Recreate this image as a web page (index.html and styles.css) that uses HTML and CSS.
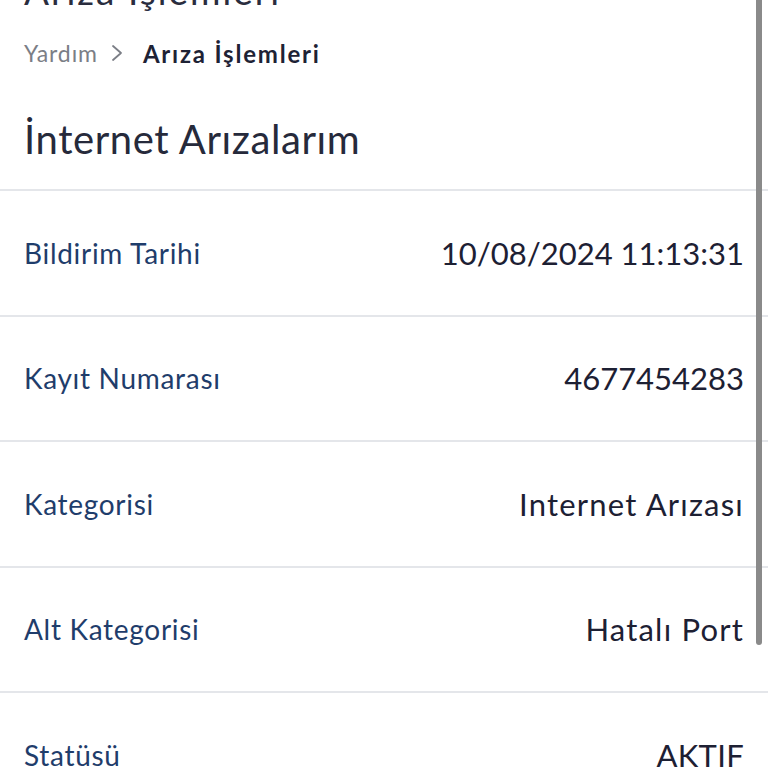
FILE: index.html
```html
<!DOCTYPE html>
<html lang="tr">

<head>
    <meta charset="UTF-8">
    <meta name="viewport" content="width=device-width, initial-scale=1.0">
    <title>Arıza İşlemleri</title>
    <link rel="stylesheet" href="styles.css">
</head>

<body>
    <div class="page">
        <div class="top">
            <h1 class="page-title">Arıza İşlemleri</h1>

            <div class="breadcrumb">
                <span class="crumb">Yardım</span>
                <svg class="chevron" width="12" height="18" viewBox="0 0 12 18">
                    <polyline points="2,2 10,9 2,16" fill="none" stroke="#7b7e86" stroke-width="1.8" stroke-linecap="round" stroke-linejoin="round" />
                </svg>
                <span class="crumb current">Arıza İşlemleri</span>
            </div>

            <h2 class="section-title">İnternet Arızalarım</h2>
        </div>

        <div class="details">
            <div class="row">
                <span class="label">Bildirim Tarihi</span>
                <span class="value num">10/08/2024 11:13:31</span>
            </div>
            <div class="row">
                <span class="label">Kayıt Numarası</span>
                <span class="value num">4677454283</span>
            </div>
            <div class="row">
                <span class="label">Kategorisi</span>
                <span class="value">Internet Arızası</span>
            </div>
            <div class="row">
                <span class="label">Alt Kategorisi</span>
                <span class="value">Hatalı Port</span>
            </div>
            <div class="row">
                <span class="label">Statüsü</span>
                <span class="value short">AKTIF</span>
            </div>
        </div>

        <!-- scroll indicator -->
        <div class="scrollbar"></div>
    </div>
</body>

</html>
```

FILE: styles.css
```css
body {
    margin: 0;
    padding: 0;
    background: #ffffff;
    font-family: "Lato", "Noto Sans", sans-serif;
    overflow: hidden;
}

.page {
    position: relative;
    width: 768px;
    height: 768px;
    overflow: hidden;
}

.top {
    padding: 0 24px;
}

.page-title {
    margin: -29px 0 0 0;
    font-size: 37px;
    line-height: 40px;
    font-weight: 400;
    letter-spacing: 2px;
    color: #2a2d3e;
}

.breadcrumb {
    display: flex;
    align-items: center;
    height: 30px;
    margin-top: 27px;
}

.crumb {
    font-size: 23px;
    letter-spacing: 0.9px;
    color: #7b7e86;
}

.crumb.current {
    font-size: 24px;
    font-weight: 700;
    color: #1e2235;
    letter-spacing: 1.8px;
}

.chevron {
    margin: 0 20px 0 13px;
}

.section-title {
    margin: 48px 0 0 0;
    font-size: 40px;
    line-height: 46px;
    font-weight: 400;
    letter-spacing: 0.6px;
    color: #262a3b;
}

.details {
    margin-top: 27px;
    border-top: 2px solid #e4e6ea;
}

.row {
    display: flex;
    justify-content: space-between;
    align-items: center;
    height: 123.5px;
    padding: 0 24px;
    border-bottom: 2px solid #e4e6ea;
}

.label {
    font-size: 28px;
    letter-spacing: 0.7px;
    color: #1f3d6b;
}

.value {
    font-size: 31px;
    letter-spacing: 1.2px;
    color: #1d2033;
}

.value.num {
    letter-spacing: 0;
}

.value.short {
    letter-spacing: 0.3px;
}

.scrollbar {
    position: absolute;
    top: 0;
    left: 756px;
    width: 6px;
    height: 645px;
    background: #8a8a8a;
    border-radius: 0 0 3px 3px;
}
```
